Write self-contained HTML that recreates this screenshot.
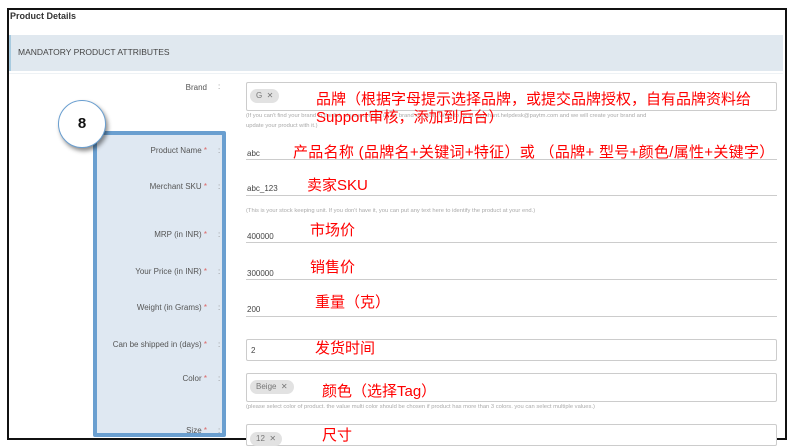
<!DOCTYPE html>
<html><head><meta charset="utf-8"><style>
body{margin:0;width:799px;height:448px;background:#fff;position:relative;overflow:hidden;font-family:"Liberation Sans","Noto Sans CJK SC",sans-serif}
.a{position:absolute}
.frame{left:7px;top:8px;width:776px;height:428px;border:2px solid #111}
.lbl{position:absolute;right:592px;font-size:8px;color:#555;white-space:nowrap}
.lbl b{color:#d66;font-weight:normal}
.col{position:absolute;left:218px;font-size:8px;color:#888}
.ul{position:absolute;left:246px;width:531px;height:0;border-top:1.5px solid #ccc}
.box{position:absolute;left:246px;width:529px;border:1px solid #ccc;border-radius:2px;background:#fff}
.val{position:absolute;left:247px;font-size:8px;color:#444}
.hint{position:absolute;left:246px;font-size:5.8px;color:#aaa;white-space:nowrap}
.tag{position:absolute;background:#e2e2e2;border-radius:7px;font-size:8px;color:#777;height:14px;line-height:14px;padding:0 6px}
.red{position:absolute;color:#f00;font-size:15px;white-space:nowrap;font-family:"Liberation Sans","Noto Sans CJK SC",sans-serif}
</style></head><body>
<div class="a frame"></div>
<div class="a" style="left:10px;top:11px;font-size:9px;font-weight:bold;color:#333">Product Details</div>
<div class="a" style="left:9px;top:35px;width:772px;height:36px;background:#e0e8ef;border-left:2px solid #a8cbe0"></div>
<div class="a" style="left:9px;top:73px;width:774px;height:1px;background:#eef2f5"></div>
<div class="a" style="left:18px;top:47px;font-size:8.5px;color:#444">MANDATORY PRODUCT ATTRIBUTES</div>

<div class="a" style="left:93px;top:131px;width:125px;height:298px;background:#dfe8f2;border:4px solid #6a9fd0;border-radius:2px"></div>
<div class="a" style="left:58px;top:100px;width:46px;height:46px;border-radius:50%;background:#fff;border:1px solid #6a9fd0;box-shadow:2px 3px 4px rgba(0,0,0,.45);text-align:center;line-height:46px;font-weight:bold;font-size:15px;color:#111">8</div>

<div class="lbl" style="top:83px">Brand</div><div class="col" style="top:82px">:</div>
<div class="lbl" style="top:146px">Product Name <b>*</b></div><div class="col" style="top:146px">:</div>
<div class="lbl" style="top:182px">Merchant SKU <b>*</b></div><div class="col" style="top:182px">:</div>
<div class="lbl" style="top:230px">MRP (in INR) <b>*</b></div><div class="col" style="top:230px">:</div>
<div class="lbl" style="top:267px">Your Price (in INR) <b>*</b></div><div class="col" style="top:267px">:</div>
<div class="lbl" style="top:303px">Weight (in Grams) <b>*</b></div><div class="col" style="top:303px">:</div>
<div class="lbl" style="top:340px">Can be shipped in (days) <b>*</b></div><div class="col" style="top:340px">:</div>
<div class="lbl" style="top:374px">Color <b>*</b></div><div class="col" style="top:374px">:</div>
<div class="lbl" style="top:426px">Size <b>*</b></div><div class="col" style="top:426px">:</div>

<div class="box" style="top:82px;height:27px"></div>
<div class="tag" style="left:250px;top:89px">G &nbsp;✕</div>
<div class="hint" style="top:113px">(If you can't find your brand in the list, please contact us for brand creation. Write to us at merchant.helpdesk@paytm.com and we will create your brand and</div>
<div class="hint" style="top:123px">update your product with it.)</div>

<div class="val" style="top:149px">abc</div><div class="ul" style="top:159px"></div>
<div class="val" style="top:184px">abc_123</div><div class="ul" style="top:195px"></div>
<div class="hint" style="top:208px">(This is your stock keeping unit. If you don't have it, you can put any text here to identify the product at your end.)</div>
<div class="val" style="top:232px">400000</div><div class="ul" style="top:242px"></div>
<div class="val" style="top:269px">300000</div><div class="ul" style="top:279px"></div>
<div class="val" style="top:305px">200</div><div class="ul" style="top:316px"></div>
<div class="box" style="top:339px;height:20px"></div><div class="val" style="left:251px;top:346px">2</div>
<div class="box" style="top:373px;height:27px"></div>
<div class="tag" style="left:250px;top:380px">Beige &nbsp;✕</div>
<div class="hint" style="top:404px">(please select color of product. the value multi color should be chosen if product has more than 3 colors. you can select multiple values.)</div>
<div class="box" style="top:424px;height:20px"></div>
<div class="tag" style="left:250px;top:432px">12 &nbsp;✕</div>

<div class="red" style="left:316px;top:88px">品牌（根据字母提示选择品牌，或提交品牌授权，自有品牌资料给</div>
<div class="red" style="left:316px;top:106px">Support审核，添加到后台）</div>
<div class="red" style="left:293px;top:141px;letter-spacing:0.3px">产品名称 (品牌名+关键词+特征）或 （品牌+ 型号+颜色/属性+关键字）</div>
<div class="red" style="left:307px;top:174px">卖家SKU</div>
<div class="red" style="left:310px;top:219px">市场价</div>
<div class="red" style="left:310px;top:256px">销售价</div>
<div class="red" style="left:315px;top:291px">重量（克）</div>
<div class="red" style="left:315px;top:337px">发货时间</div>
<div class="red" style="left:322px;top:380px">颜色（选择Tag）</div>
<div class="red" style="left:322px;top:424px">尺寸</div>
</body></html>
